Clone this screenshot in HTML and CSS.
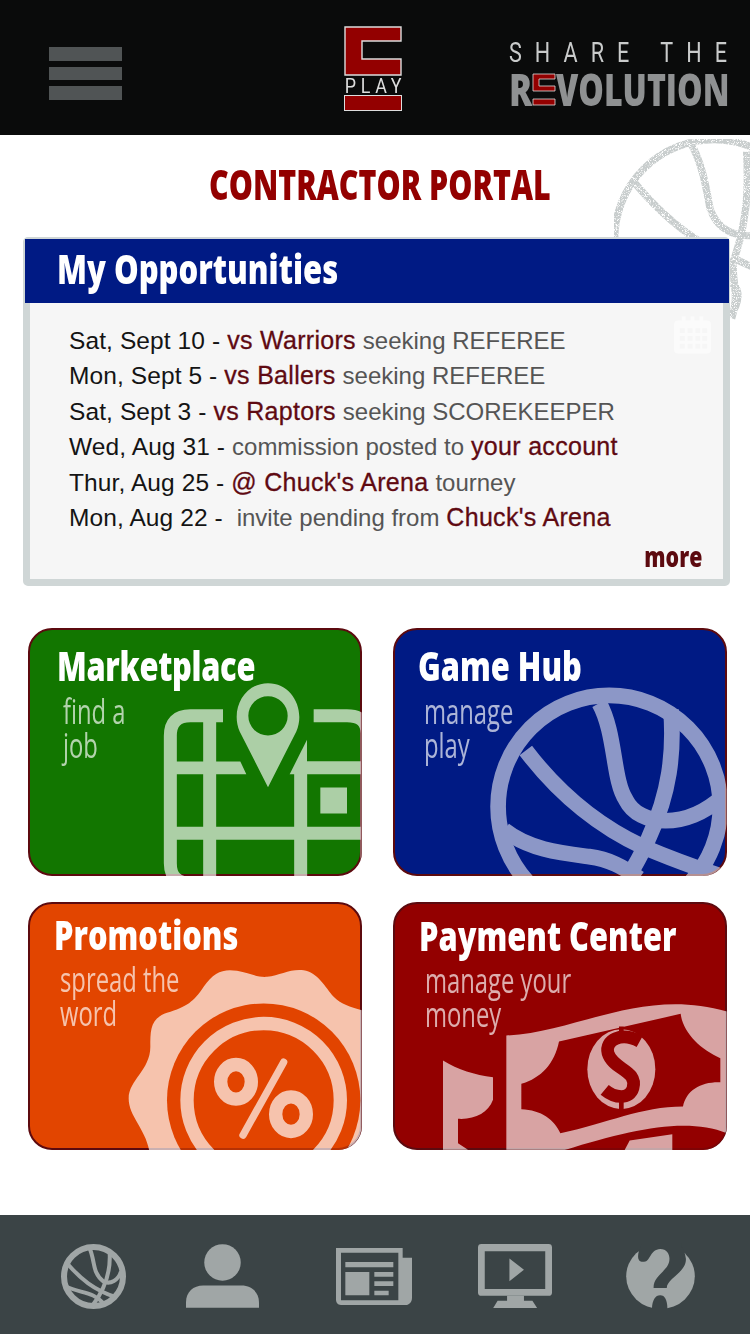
FILE: index.html
```html
<!DOCTYPE html>
<html lang="en">
<head>
  <meta charset="UTF-8">
  <title>Contractor Portal</title>
  <link rel="stylesheet" href="styles.css">
</head>
<body>
  <header class="topbar">
    <div class="burger"><span></span><span></span><span></span></div>
    <div class="logo">
      <svg class="logo-c" viewBox="0 0 58 50"><path d="M1 1H57V15H18V33H57V49H1Z"/></svg>
      <div class="logo-play">PLAY</div>
      <div class="logo-bar"></div>
    </div>
    <div class="slogan">
      <div class="slogan-top">SHARE THE</div>
      <div class="slogan-main">
        <span class="slogan-r">R</span>
        <svg class="slogan-e" viewBox="0 0 24 33"><path d="M1 1H23V6H7V13H23V18H1Z"/><path d="M1 26H23V32H1Z"/></svg>
        <span class="slogan-rest">VOLUTION</span>
      </div>
    </div>
  </header>

  <main class="content">
    <svg class="bg-ball" viewBox="0 0 450 570">
      <defs>
        <filter id="speckle" x="0" y="0" width="100%" height="100%">
          <feTurbulence type="fractalNoise" baseFrequency="0.55" numOctaves="2" result="n"/>
          <feColorMatrix in="n" type="matrix" values="0 0 0 0 0  0 0 0 0 0  0 0 0 0 0  0 0 0 -5 3.5"/>
          <feComposite in="SourceGraphic" operator="in"/>
        </filter>
      </defs>
      <g filter="url(#speckle)" fill="none" stroke="#c8cdcd" stroke-width="22">
        <circle cx="342" cy="312" r="298"/>
        <path d="M97 135C150 200 220 270 300 320"/>
        <path d="M270 20C310 90 320 170 330 220C350 280 400 310 470 300"/>
        <path d="M440 50C445 150 445 250 400 380C395 440 420 480 395 550"/>
        <path d="M395 365C420 380 440 390 470 400"/>
        <path d="M390 440C420 460 420 490 400 530"/>
      </g>
    </svg>

    <h1 class="page-title"><span>CONTRACTOR PORTAL</span></h1>

    <section class="panel">
      <h2 class="panel-head"><span>My Opportunities</span></h2>
      <svg class="cal" viewBox="0 0 38 38">
        <path fill="#fbfbfb" d="M4 4H8V0H12V4H17V0H21V4H26V0H30V4H34Q38 4 38 8V34Q38 38 34 38H4Q0 38 0 34V8Q0 4 4 4Z"/>
        <g fill="#f6f6f6">
          <rect x="6" y="12" width="5" height="5"/><rect x="14" y="12" width="5" height="5"/><rect x="22" y="12" width="5" height="5"/><rect x="29" y="12" width="5" height="5"/>
          <rect x="6" y="20" width="5" height="5"/><rect x="14" y="20" width="5" height="5"/><rect x="22" y="20" width="5" height="5"/><rect x="29" y="20" width="5" height="5"/>
          <rect x="6" y="28" width="5" height="5"/><rect x="14" y="28" width="5" height="5"/><rect x="22" y="28" width="5" height="5"/><rect x="29" y="28" width="5" height="5"/>
        </g>
      </svg>
      <ul class="opps">
        <li>Sat, Sept 10 - <b>vs Warriors</b> <i>seeking REFEREE</i></li>
        <li>Mon, Sept 5 - <b>vs Ballers</b> <i>seeking REFEREE</i></li>
        <li>Sat, Sept 3 - <b>vs Raptors</b> <i>seeking SCOREKEEPER</i></li>
        <li>Wed, Aug 31 - <i>commission posted to</i> <b>your account</b></li>
        <li>Thur, Aug 25 - <b>@ Chuck's Arena</b> <i>tourney</i></li>
        <li>Mon, Aug 22 - &nbsp;<i>invite pending from</i> <b>Chuck's Arena</b></li>
      </ul>
      <div class="more"><span>more</span></div>
    </section>

    <section class="cards">
      <a class="card card-green">
        <svg class="card-art" viewBox="83 25 1002 743">
          <g opacity=".65">
            <g fill="none" stroke="#fff" stroke-width="39">
              <path d="M668 288H570Q510 288 510 348V730Q510 790 570 790H700"/>
              <path d="M940 288H1040Q1100 288 1100 340V800"/>
              <path d="M628 288V800"/>
              <path d="M510 640H1100"/>
              <path d="M901 440V800"/>
              <path d="M901 444H1100"/>
            </g>
            <path fill="#fff" d="M510 425H720L738 463H510Z"/>
            <path fill="#fff" d="M920 360V463H868Z"/>
            <rect fill="#fff" x="960" y="503" width="80" height="78"/>
            <path fill="#fff" fill-rule="evenodd" d="M803 502L718 335C690 270 730 190 803 190C876 190 916 270 888 335ZM803 229A59 59 0 1 0 803 347A59 59 0 1 0 803 229Z"/>
          </g>
        </svg>
        <h3 class="card-title"><span>Marketplace</span></h3>
        <p class="card-sub">find a<br>job</p>
      </a>

      <a class="card card-blue">
        <svg class="card-art" viewBox="53 25 999 743">
          <g opacity=".55" fill="none" stroke="#fff" stroke-width="47">
            <circle cx="700" cy="560" r="333"/>
            <path d="M450 392C540 510 650 610 800 680C870 710 950 740 1040 770"/>
            <path d="M670 250C720 340 710 480 750 540C790 620 930 630 1040 530"/>
            <path d="M885 270C895 400 880 520 820 650C800 700 780 730 755 775"/>
            <path d="M385 630C460 690 560 700 640 710C700 718 740 740 790 775"/>
          </g>
        </svg>
        <h3 class="card-title"><span>Game Hub</span></h3>
        <p class="card-sub">manage<br>play</p>
      </a>

      <a class="card card-orange">
        <svg class="card-art" viewBox="83 37 1002 741">
          <g opacity=".68">
            <path fill="#fff" d="M448 790C440 720 385 680 385 625C385 570 450 540 450 470C450 420 450 385 500 368C560 350 580 335 610 290C640 245 670 235 710 242C750 250 770 262 800 260C840 255 870 235 910 240C950 245 975 290 1000 320C1025 345 1050 350 1090 362V790Z"/>
            <circle fill="#e24500" cx="790" cy="630" r="290"/>
            <circle fill="none" stroke="#fff" stroke-width="40" cx="790" cy="630" r="230"/>
            <g fill="none" stroke="#fff">
              <ellipse cx="707" cy="575" rx="46" ry="52" stroke-width="40"/>
              <ellipse cx="872" cy="672" rx="46" ry="52" stroke-width="40"/>
              <path d="M850 516L728 735" stroke-width="22" stroke-linecap="round"/>
            </g>
          </g>
        </svg>
        <h3 class="card-title"><span>Promotions</span></h3>
        <p class="card-sub">spread the<br>word</p>
      </a>

      <a class="card card-red">
        <svg class="card-art" viewBox="55 37 1002 743">
          <g opacity=".64">
            <path fill="#fff" d="M395 437C600 430 800 290 1057 365V780H395Z"/>
            <path fill="#930000" d="M553 455L918 372C925 430 980 480 1037 505V577C980 575 935 600 925 650C800 650 700 700 557 730C540 690 500 660 440 658V582C500 565 540 520 553 455Z"/>
            <path fill="#930000" d="M1057 730C930 680 760 720 540 790H1057Z"/>
            <path fill="#fff" d="M745 790L765 752L893 733V790Z"/>
            <ellipse fill="#fff" cx="740" cy="538" rx="102" ry="120"/>
            <path fill="none" stroke="#930000" stroke-width="38" d="M795 455C740 425 690 450 700 490C715 540 790 540 775 595C765 630 720 625 690 600"/>
            <path fill="none" stroke="#930000" stroke-width="14" d="M740 410V440M740 635V665"/>
            <path fill="#fff" d="M205 512C250 540 300 555 355 562V630C340 670 300 690 250 687V760L280 780H205Z"/>
          </g>
        </svg>
        <h3 class="card-title"><span>Payment Center</span></h3>
        <p class="card-sub">manage your<br>money</p>
      </a>
    </section>
  </main>

  <nav class="tabbar">
    <svg class="tab tab-ball" viewBox="33 23 194 194">
      <g fill="none" stroke="#a0a6a6">
        <circle cx="130" cy="120" r="88" stroke-width="18"/>
        <g stroke-width="12">
          <path d="M55 85C90 125 130 160 198 182"/>
          <path d="M118 35C135 70 125 110 160 135C180 145 205 130 212 105"/>
          <path d="M178 45C182 100 170 150 128 205"/>
          <path d="M48 150C90 170 130 165 160 200"/>
        </g>
      </g>
    </svg>
    <svg class="tab tab-user" viewBox="408 25 220 192" fill="#a0a6a6">
      <circle cx="518" cy="80" r="55"/>
      <path d="M408 217V200C408 170 430 150 460 150H575C605 150 628 170 628 200V217Z"/>
    </svg>
    <svg class="tab tab-news" viewBox="20 36 228 171" fill="#a0a6a6">
      <path fill-rule="evenodd" d="M20 36H220V65H248V185C248 200 238 207 228 207H35C25 207 20 200 20 190ZM35 50V193H207V50Z"/>
      <path d="M48 78H192V94H48ZM48 108H120V178H48ZM135 108H192V122H135ZM135 136H192V150H135ZM135 164H178V178H135Z"/>
    </svg>
    <svg class="tab tab-video" viewBox="447 27 219 189" fill="#a0a6a6">
      <path fill-rule="evenodd" d="M457 27H656Q666 27 666 37V170Q666 180 656 180H457Q447 180 447 170V37Q447 27 457 27ZM467 48V160H646V48Z"/>
      <path d="M540 70L583 103L540 137ZM533 180H583V195H608L622 216H492L505 195H533Z"/>
    </svg>
    <svg class="tab tab-help" viewBox="47 22 208 200">
      <ellipse cx="151" cy="123" rx="104" ry="99" fill="#a0a6a6"/>
      <path fill="#3b4446" d="M97 20C75 60 80 85 105 78C120 75 120 42 150 40C180 40 185 75 170 95C150 120 130 130 130 158H170C170 130 230 110 228 70C226 50 220 42 215 33V20Z"/>
      <path fill="#3b4446" d="M125 225C125 195 135 180 150 180C165 180 172 195 172 225Z"/>
    </svg>
  </nav>
</body>
</html>
```

FILE: styles.css
```css
* {
  box-sizing: border-box;
}
body {
  margin: 0;
  width: 750px;
  height: 1334px;
  display: flex;
  flex-direction: column;
  background: #fff;
  font-family: 'Liberation Sans', sans-serif;
  overflow: hidden;
}

/* top bar */
.topbar {
  height: 135px;
  flex: none;
  background: #0a0b0b;
  display: flex;
  align-items: flex-start;
}
.burger {
  width: 73px;
  margin: 47px 0 0 49px;
  display: flex;
  flex-direction: column;
  gap: 6px;
}
.burger span {
  height: 13.7px;
  background: #505455;
}
.logo {
  width: 58px;
  margin: 26px 0 0 222px;
}
.logo-c {
  display: block;
  width: 58px;
  height: 50px;
  fill: #930000;
  stroke: #ddd;
  stroke-width: 1.4;
}
.logo-play {
  height: 19px;
  font: 400 21px/20px Roboto, sans-serif;
  letter-spacing: 5.5px;
  color: #ddd;
  white-space: nowrap;
  padding-left: 1px;
  transform: scaleX(.85);
  transform-origin: left;
}
.logo-bar {
  height: 16px;
  background: #930000;
  border: 1.4px solid #ddd;
}
.slogan {
  width: 220px;
  margin: 40px 0 0 107px;
}
.slogan-top {
  font: 400 27px/26px Roboto, sans-serif;
  letter-spacing: 16.3px;
  color: #c9cbcb;
  white-space: nowrap;
  transform: scaleX(.8);
  transform-origin: left;
  width: 320px;
}
.slogan-main {
  display: flex;
  align-items: center;
  height: 33px;
  margin-top: 7px;
  color: #8f9192;
  font: 800 44px/33px 'Open Sans', sans-serif;
}
.slogan-r {
  width: 23px;
  transform: scaleX(.78);
  transform-origin: left;
}
.slogan-e {
  width: 24px;
  height: 33px;
  flex: none;
  fill: #930000;
  stroke: #ddd;
  stroke-width: .8;
}
.slogan-rest {
  transform: scaleX(.73);
  transform-origin: left;
  white-space: nowrap;
}

/* main area */
.content {
  flex: 1;
  position: relative;
}
.bg-ball {
  position: absolute;
  left: 600px;
  top: 0;
  width: 150px;
  height: 190px;
}
.page-title {
  position: relative;
  height: 102px;
  margin: 0;
  display: flex;
  justify-content: center;
  padding-top: 18px;
  font: 800 43px/62px 'Open Sans', sans-serif;
  color: #930000;
  white-space: nowrap;
}
.page-title span {
  display: block;
  margin-left: 10px;
  transform: scaleX(.706);
}
.panel {
  position: relative;
  width: 707px;
  height: 349px;
  margin-left: 23px;
  background: #f6f6f6;
  border: 7px solid #cfd6d6;
  border-radius: 5px;
}
.panel-head {
  height: 64px;
  margin: -5px -6px 0 -5px;
  padding-left: 32px;
  background: #001a84;
  color: #fff;
  font: 800 40px/60px 'Open Sans', sans-serif;
  white-space: nowrap;
}
.panel-head span {
  display: block;
  transform: scaleX(.775);
  transform-origin: left;
}
.cal {
  position: absolute;
  left: 644px;
  top: 72px;
  width: 37px;
  height: 38px;
}
.opps {
  list-style: none;
  margin: 0;
  padding: 20px 0 0 39px;
  font-size: 24.5px;
  letter-spacing: .1px;
  color: #141414;
  white-space: nowrap;
}
.opps li {
  height: 35.4px;
  line-height: 35.4px;
}
.opps b {
  font-weight: 400;
  font-size: 25px;
  color: #5f0a12;
  letter-spacing: .3px;
  -webkit-text-stroke: .3px #5f0a12;
}
.opps i {
  font-style: normal;
  font-size: 24px;
  letter-spacing: 0;
  color: #555;
}
.more {
  display: flex;
  justify-content: flex-end;
  padding: 0 21px 0 0;
  margin-top: 2px;
  font: 800 28px/38px 'Open Sans', sans-serif;
  color: #5c0a0f;
}
.more span {
  transform: scaleX(.76);
  transform-origin: right;
}

/* tiles */
.cards {
  display: grid;
  grid-template-columns: 334px 334px;
  grid-auto-rows: 248px;
  gap: 26px 31px;
  margin: 42px 0 0 27.5px;
}
.card {
  position: relative;
  display: block;
  color: #fff;
  border: 2px solid #5c0a0f;
  border-radius: 24px;
  padding: 14px 0 0 27px;
}
.card-art {
  position: absolute;
  left: -2px;
  top: -2px;
  width: 334px;
  height: 248px;
  clip-path: inset(0 round 24px);
}
.card-green { background: #127600; }
.card-blue { background: #001a84; padding-left: 23px; }
.card-orange { background: #e24500; padding: 9px 0 0 24px; }
.card-red { background: #930000; padding: 10px 0 0 24px; }
.card-title {
  position: relative;
  margin: 0;
  font: 800 40px/44px 'Open Sans', sans-serif;
  white-space: nowrap;
}
.card-title span {
  display: block;
  transform: scaleX(.77);
  transform-origin: left;
}
.card-green .card-title {
  letter-spacing: -.4px;
}
.card-sub {
  position: relative;
  margin: 6px 0 0 6px;
  font: 500 34px/34px 'Open Sans', sans-serif;
  white-space: nowrap;
  opacity: .68;
  transform: scaleX(.7);
  transform-origin: left;
}
.card-orange .card-sub,
.card-red .card-sub {
  margin-top: 5px;
}

/* bottom nav */
.tabbar {
  height: 119px;
  flex: none;
  background: #3b4446;
  display: flex;
  align-items: center;
  padding: 3px 0 0 61px;
}
.tab {
  display: block;
  flex: none;
  height: 64px;
}
.tab-ball { width: 65px; height: 65px; }
.tab-user { width: 73px; margin-left: 60px; }
.tab-news { width: 76px; height: 57px; margin-left: 77px; }
.tab-video { width: 74px; margin-left: 66px; }
.tab-help { width: 69px; height: 66px; margin-left: 74px; }
```
